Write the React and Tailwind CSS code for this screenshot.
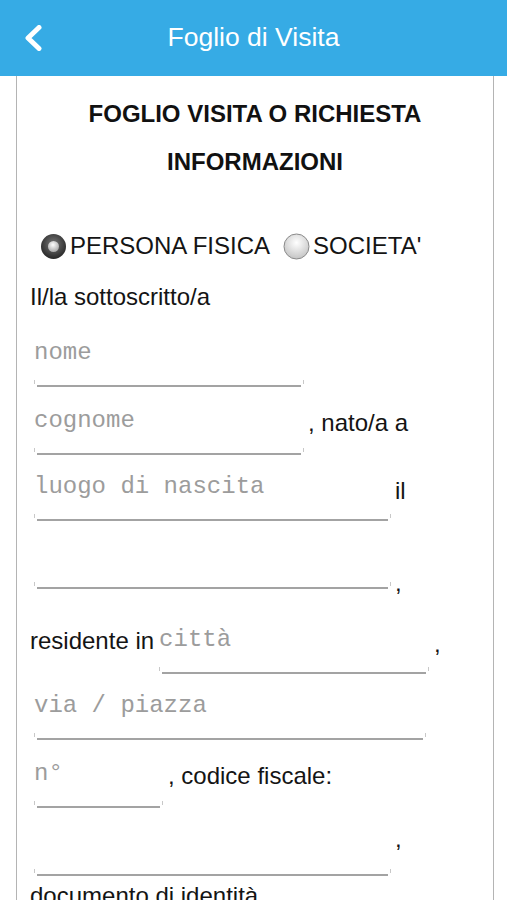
import React from 'react';

const sans = { fontFamily: '"Liberation Sans", Arial, sans-serif' };
const mono = { fontFamily: '"Liberation Mono", "Courier New", monospace' };

const RadioOn = () => (
  <svg width="27" height="27" viewBox="0 0 27 27">
    <defs>
      <radialGradient id="ron" cx="50%" cy="40%" r="60%">
        <stop offset="0%" stopColor="#7a7a7a" />
        <stop offset="100%" stopColor="#262626" />
      </radialGradient>
      <radialGradient id="rdot" cx="45%" cy="35%" r="65%">
        <stop offset="0%" stopColor="#ffffff" />
        <stop offset="100%" stopColor="#a8a8a8" />
      </radialGradient>
    </defs>
    <circle cx="13.5" cy="13.5" r="12.5" fill="url(#ron)" />
    <circle cx="13.5" cy="13.5" r="5.5" fill="url(#rdot)" />
  </svg>
);

const RadioOff = () => (
  <svg width="27" height="27" viewBox="0 0 27 27">
    <defs>
      <radialGradient id="roff" cx="50%" cy="35%" r="65%">
        <stop offset="0%" stopColor="#ffffff" />
        <stop offset="100%" stopColor="#c4c4c4" />
      </radialGradient>
    </defs>
    <circle cx="13.5" cy="13.5" r="12.5" fill="url(#roff)" stroke="#8a8a8a" strokeWidth="1" />
  </svg>
);

// input with an iOS style underline: small ticks at both ends
const Field = ({ placeholder, className }) => (
  <div className={`flex flex-col h-[46px] shrink-0 ${className}`}>
    <div className="h-[24px] leading-[24px] text-[24px] text-[#9c9c9c] whitespace-pre" style={mono}>
      {placeholder}
    </div>
    <div className="mt-auto flex items-end h-[8px]">
      <div className="w-px h-[4px] bg-[#c8c8c8] mb-[3px]" />
      <div className="flex-1 h-[2px] bg-[#a3a3a3] mx-[2px]" />
      <div className="w-px h-[4px] bg-[#c8c8c8] mb-[3px]" />
    </div>
  </div>
);

const Label = ({ children, className = '' }) => (
  <span className={`text-[24px] leading-[28px] text-[#141414] whitespace-pre ${className}`}>{children}</span>
);

export default function App() {
  return (
    <div className="w-[507px] h-[900px] overflow-hidden bg-white" style={sans}>
      <header className="h-[76px] bg-[#36abe5] flex items-center relative">
        <svg className="absolute left-[23px] top-[25px]" width="21" height="26" viewBox="0 0 21 26">
          <path d="M16 2.5 L5 13 L16 23.5" fill="none" stroke="#ffffff" strokeWidth="5" strokeLinecap="round" strokeLinejoin="round" />
        </svg>
        <h1 className="w-full text-center text-white text-[26.5px] font-normal">Foglio di Visita</h1>
      </header>

      <div className="ml-[16px] mr-[13px] h-[824px] border-x border-[#b4b4b4] px-[13px] pt-[14px]">
        <h2 className="text-center font-bold text-[24px] leading-[48px] text-[#111]">
          FOGLIO VISITA O RICHIESTA<br />INFORMAZIONI
        </h2>

        <div className="mt-[45px] h-[30px] flex items-center pl-[10px]">
          <RadioOn />
          <Label className="ml-[3px]">PERSONA FISICA</Label>
          <span className="ml-[13px]"><RadioOff /></span>
          <Label className="ml-[3px]">SOCIETA'</Label>
        </div>

        <div className="mt-[22px]">
          <Label>Il/la sottoscritto/a</Label>
        </div>

        <div className="mt-[29px] flex items-start">
          <Field placeholder="nome" className="ml-[4px] w-[270px]" />
        </div>

        <div className="mt-[22px] flex items-start">
          <Field placeholder="cognome" className="ml-[4px] w-[270px]" />
          <Label className="ml-[4px]">, nato/a a</Label>
        </div>

        <div className="mt-[20px] flex items-start">
          <Field placeholder="luogo di nascita" className="ml-[4px] w-[357px]" />
          <Label className="ml-[4px] mt-[2px]">il</Label>
        </div>

        <div className="mt-[22px] flex items-start">
          <Field placeholder="" className="ml-[4px] w-[357px]" />
          <Label className="ml-[4px] mt-[26px] h-[20px]">,</Label>
        </div>

        <div className="mt-[39px] flex items-start">
          <Label className="mt-[-1px]">residente in</Label>
          <Field placeholder="città" className="ml-[5px] w-[270px]" />
          <Label className="ml-[5px] mt-[2px]">,</Label>
        </div>

        <div className="mt-[20px] flex items-start">
          <Field placeholder="via / piazza" className="ml-[4px] w-[392px]" />
        </div>

        <div className="mt-[22px] flex items-start">
          <Field placeholder="n°" className="ml-[4px] w-[129px]" />
          <Label className="ml-[5px]">, codice fiscale:</Label>
        </div>

        <div className="mt-[22px] flex items-start">
          <Field placeholder="" className="ml-[4px] w-[357px]" />
          <Label className="ml-[4px] mt-[-5px]">,</Label>
        </div>

        <div className="mt-[6px]">
          <Label>documento di identità</Label>
        </div>
      </div>
    </div>
  );
}
